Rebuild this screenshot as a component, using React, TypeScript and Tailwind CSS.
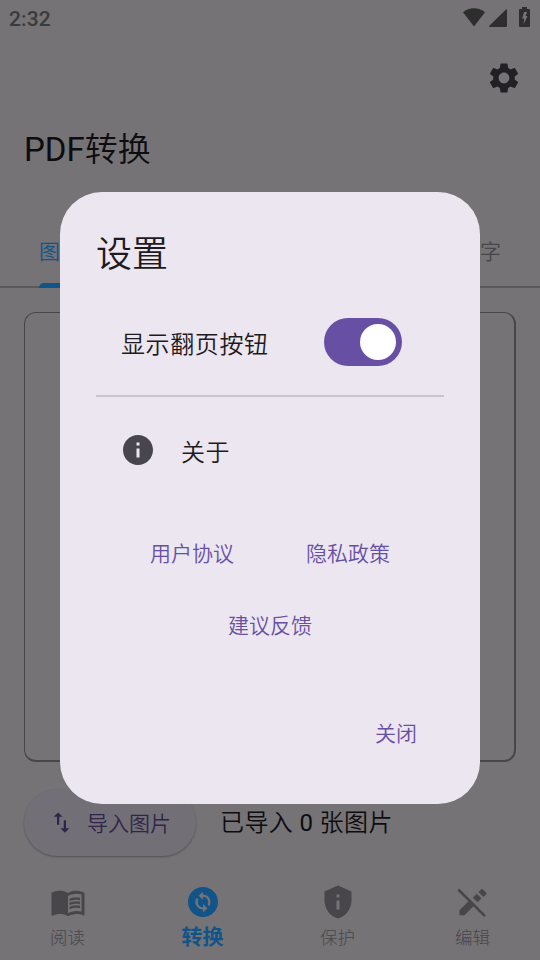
import React from "react";
import { MdSettings, MdInfo, MdMenuBook, MdChangeCircle, MdPrivacyTip, MdImportExport } from "react-icons/md";

function StatusBar() {
  return (
    <header className="flex h-9 items-center justify-between pl-[9px] pr-[10px] text-[#2e2e2e]">
      <span className="pt-px text-[21px] font-medium leading-9 tracking-[0.1px] text-[#3b3a3c]">2:32</span>
      <div className="flex h-9 items-start">
        <svg className="mt-2 h-[19px] w-[22px]" viewBox="0 0 22 19" fill="currentColor">
          <path d="M0 4.200C6-1.200 16-1.200 22 4.200L11 18.600z" />
        </svg>
        <svg className="ml-1 mt-[9px] h-[18px] w-[18px]" viewBox="0 0 18 18" fill="currentColor">
          <path d="M17 .4Q18-.2 18 1V17q0 1-1 1H1q-1.500-.2-.6-1.200z" />
        </svg>
        <svg className="ml-3 mt-[7px] h-5 w-[11px]" viewBox="0 0 11 20" fill="currentColor" fillRule="evenodd">
          <path d="M3 0h5v2h2q1 0 1 1v16q0 1-1 1H1q-1 0-1-1V3q0-1 1-1h2zM5 5L3.200 11.500h2L4.500 17.500L8.500 9H6.500L8.200 5z" />
        </svg>
      </div>
    </header>
  );
}

function PencilOffIcon() {
  return (
    <svg className="h-9 w-9" viewBox="0 0 36 36" fill="currentColor">
      <path d="M4.500 31.300v-5l10.500-10.500 5 5L9.500 31.300zM17.800 13.700l3.900-4 4.800 4.600-3.800 4zM23.400 8l2.600-2.600q1-1 2 0l3 3q1 1 0 2l-2.600 2.500z" />
      <path d="M3.300 5.500L30 32.200" fill="none" stroke="currentColor" strokeWidth="2.500" />
    </svg>
  );
}

const navItems = [
  { label: "阅读", icon: <MdMenuBook size={36} />, active: false },
  { label: "转换", icon: <MdChangeCircle size={36} />, active: true },
  { label: "保护", icon: <MdPrivacyTip size={36} />, active: false },
  { label: "编辑", icon: <PencilOffIcon />, active: false },
];

function SettingsDialog() {
  return (
    <section className="absolute left-[60px] top-48 flex h-[612px] w-[420px] flex-col rounded-[42px] bg-[#ece6f0] px-9 font-[350] text-[#1d1b20]">
      <h2 className="mt-[39px] text-[36px] font-[350] leading-[48px]">设置</h2>
      <div className="mt-[27px] flex h-[72px] items-center justify-between pl-[25px] pr-[42px]">
        <span className="pt-1.5 text-[24px] tracking-[0.6px]">显示翻页按钮</span>
        <button className="flex h-12 w-[78px] items-center justify-end rounded-full bg-[#6750a4] pr-1.5">
          <span className="h-9 w-9 rounded-full bg-white" />
        </button>
      </div>
      <div className="mt-[17px] h-0.5 bg-[#cac4d0]" />
      <div className="mt-[17px] flex h-[72px] items-center pl-6">
        <MdInfo size={36} className="text-[#49454f]" />
        <span className="ml-[25px] pt-1.5 text-[24px] tracking-[0.6px]">关于</span>
      </div>
      <div className="mt-[33px] flex h-[72px] items-center justify-center gap-[72px] text-[21px] text-[#6750a4]">
        <span>用户协议</span>
        <span>隐私政策</span>
      </div>
      <div className="flex h-[72px] items-center justify-center text-[21px] text-[#6750a4]">建议反馈</div>
      <div className="mt-9 flex h-[72px] items-center justify-end pr-[27px] text-[21px] text-[#6750a4]">关闭</div>
    </section>
  );
}

export default function App() {
  return (
    <main className="relative flex h-[960px] w-[540px] flex-col overflow-hidden bg-[#757376] font-[Roboto,'Noto_Sans_CJK_SC',sans-serif]">
      <StatusBar />
      <div className="flex h-[84px] items-center justify-end pr-[18px] text-[#212025]">
        <MdSettings size={36} />
      </div>
      <h1 className="ml-6 mt-[5px] h-[59px] text-[33px] font-[350] leading-[50px] text-[#0d0c0e]">
        <span className="font-normal">PDF</span>转换
      </h1>
      <nav className="mt-8 flex h-[72px] items-stretch justify-between border-b-2 border-[#5b595d] px-[39px] text-[21px] font-[350] leading-[72px] text-[#48464a]">
        <div className="flex flex-col text-[#115488]">
          <span className="h-[67px]">图片</span>
          <span className="h-[5px] w-[42px] shrink-0 rounded-t-[5px] bg-[#115488]" />
        </div>
        <span>文字</span>
      </nav>
      <div className="mx-6 mt-6 h-[450px] shrink-0 rounded-xl border border-b-2 border-r-2 border-[#484649]" />
      <div className="mt-[26px] flex h-[68px] shrink-0 items-center pl-6">
        <button className="flex h-[67px] w-[172px] items-center rounded-full bg-[#727076] pl-6 text-[21px] font-[350] text-[#2f254b] shadow-[0_1px_2px_rgba(0,0,0,0.3)]">
          <MdImportExport size={27} />
          <span className="ml-3 pt-1.5">导入图片</span>
        </button>
        <span className="ml-6 pt-0.5 text-[24px] font-[350] tracking-[0.4px] text-[#0d0c0e]">
          已导入 <span className="font-normal">0</span> 张图片
        </span>
      </div>
      <footer className="mt-[18px] grid h-[86px] grid-cols-4 pt-[10px]">
        {navItems.map((item) => (
          <div key={item.label} className={item.active ? "flex flex-col items-center text-[#115488]" : "flex flex-col items-center text-[#48464a]"}>
            {item.icon}
            <span className={item.active ? "text-[21px] font-bold leading-[34px]" : "text-[17.5px] font-light leading-9"}>{item.label}</span>
          </div>
        ))}
      </footer>
      <SettingsDialog />
    </main>
  );
}
